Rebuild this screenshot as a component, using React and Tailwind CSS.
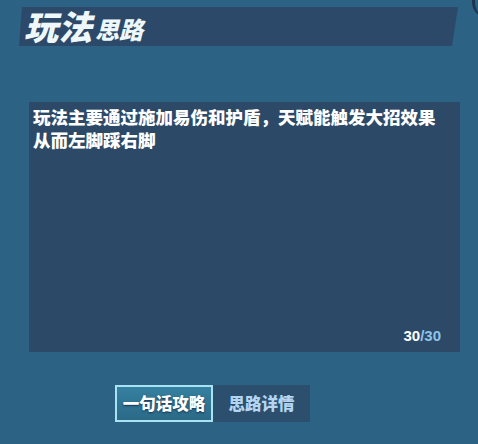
export default function App() {
  const font = { fontFamily: '"Noto Sans CJK SC", "Noto Sans", sans-serif' };

  return (
    <div
      className="relative w-[478px] h-[444px] overflow-hidden bg-[#2c6284] flex flex-col"
      style={font}
    >
      {/* corner ornament */}
      <div className="absolute -right-[26px] -top-[16px] w-[32px] h-[34px] rounded-full border-l-[3px] border-[#1e3550]" />

      {/* title bar */}
      <div className="mt-[7px] ml-[19px] w-[439px] h-[39px] bg-[#2d4969] [clip-path:polygon(3px_0,100%_0,calc(100%-6px)_100%,0_100%)] flex items-end pl-[5px] pb-[3px]">
        <span className="italic font-black text-[34px] leading-none text-[#eef8fb]">
          玩法
        </span>
        <span className="italic font-black text-[24px] leading-none text-[#eef8fb] ml-[3px] mb-[2px]">
          思路
        </span>
      </div>

      {/* description box */}
      <div className="mt-[56px] ml-[29px] w-[431px] h-[250px] bg-[#2c4a68] flex flex-col pl-[4px] pr-[19px] pt-[3px] pb-[9px]">
        <p className="text-[17.5px] leading-[23px] font-black text-white">
          玩法主要通过施加易伤和护盾，天赋能触发大招效果
          <br />
          从而左脚踩右脚
        </p>
        <div className="mt-auto self-end text-[15px] leading-none font-bold" style={{ fontFamily: '"Liberation Sans", Arial, sans-serif' }}>
          <span className="text-white">30</span>
          <span className="text-[#8cc4e8]">/30</span>
        </div>
      </div>

      {/* tabs */}
      <div className="mt-[33px] ml-[115px] flex">
        <button className="w-[98px] h-[37px] border-2 border-[#a9e2f2] bg-gradient-to-b from-[#3580a0] to-[#2b6a88] text-white text-[16.5px] font-black [text-shadow:0_1px_2px_#16304a] flex items-center justify-center">
          一句话攻略
        </button>
        <button className="w-[97px] h-[37px] bg-[#2b4f6d] text-[#b4d4f2] text-[16.5px] font-black flex items-center justify-center">
          思路详情
        </button>
      </div>
    </div>
  );
}
